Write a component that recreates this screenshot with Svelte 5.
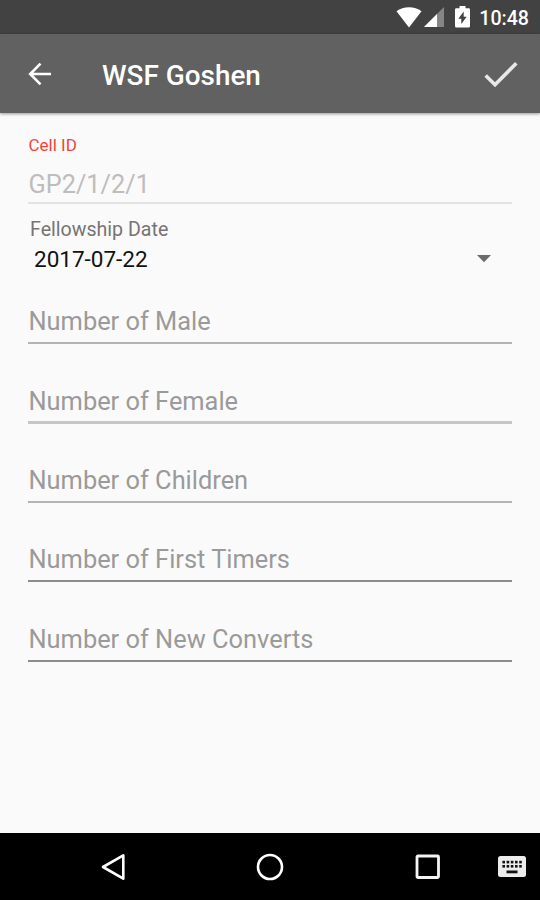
<script>
    let cellId = $state('GP2/1/2/1');
    let date = $state('2017-07-22');

    const fields = [
        { name: 'male', label: 'Number of Male' },
        { name: 'female', label: 'Number of Female' },
        { name: 'children', label: 'Number of Children' },
        { name: 'timers', label: 'Number of First Timers' },
        { name: 'converts', label: 'Number of New Converts' }
    ];
</script>

<div class="screen">
    <div class="status">
        <svg class="wifi" width="26" height="21" viewBox="0 0 26 21">
            <path d="M13 20.5 0.5 4.3C4 1.6 8.300 0.300 13 0.300s9 1.300 12.500 4z" fill="#fff" />
        </svg>
        <svg class="signal" width="20" height="20" viewBox="0 0 20 20">
            <path d="M0 20 20 0v20z" fill="#858585" />
            <path d="M0 20 13 7v13z" fill="#fff" />
        </svg>
        <svg class="battery" width="15" height="22" viewBox="0 0 15 22">
            <path d="M4.500 0h6v2.300h3.200q1.300 0 1.300 1.300v16.600q0 1.300-1.300 1.300H1.300Q0 21.500 0 20.200V3.600q0-1.300 1.300-1.300h3.200z" fill="#fff" />
            <path d="M8.700 5.500v5.200h3L6.300 18v-5.200h-3z" fill="#424242" />
        </svg>
        <span class="clock">10:48</span>
    </div>

    <header>
        <button class="back" aria-label="Back">
            <svg width="24" height="24" viewBox="0 0 24 24">
                <path d="M23 12H2.500M12.500 1.600 2.200 12l10.300 10.400" fill="none" stroke="#fff" stroke-width="2.600" />
            </svg>
        </button>
        <h1>WSF Goshen</h1>
        <button class="done" aria-label="Done">
            <svg width="34" height="27" viewBox="0 0 34 27">
                <path d="M1.700 14.500 11 23.800 32.300 2.200" fill="none" stroke="#e8e8e8" stroke-width="3.600" />
            </svg>
        </button>
    </header>

    <main>
        <div class="cell">
            <span class="caption">Cell ID</span>
            <span class="value">{cellId}</span>
        </div>

        <div class="date">
            <span class="date-label">Fellowship Date</span>
            <div class="spinner">
                <span>{date}</span>
                <svg width="14" height="8" viewBox="0 0 14 8">
                    <path d="M0 0h14L7 7.300z" fill="#6b6b6b" />
                </svg>
            </div>
        </div>

        {#each fields as field (field.name)}
            <div class="field {field.name}">
                <span>{field.label}</span>
            </div>
        {/each}
    </main>

    <nav>
        <svg class="nav-back" width="26" height="28" viewBox="0 0 26 28">
            <path d="M23.300 2.300v23.400L3 14z" fill="none" stroke="#fff" stroke-width="2.600" stroke-linejoin="round" />
        </svg>
        <svg class="nav-home" width="28" height="28" viewBox="0 0 28 28">
            <circle cx="14" cy="14" r="12" fill="none" stroke="#fff" stroke-width="2.600" />
        </svg>
        <svg class="nav-recent" width="26" height="26" viewBox="0 0 26 26">
            <rect x="2" y="2" width="21.500" height="21.500" rx="1" fill="none" stroke="#f4f4f4" stroke-width="2.800" />
        </svg>
        <svg class="nav-keyboard" width="28" height="21" viewBox="0 0 28 21">
            <rect width="28" height="21" rx="2.500" fill="#ececec" />
            {#each [4.4, 8.6, 12.8, 17, 21.2] as x}
                <rect {x} y="4.800" width="2.600" height="2.600" fill="#111" />
                <rect {x} y="9" width="2.600" height="2.600" fill="#111" />
            {/each}
            <rect x="8.500" y="14.500" width="11" height="2.800" fill="#111" />
        </svg>
    </nav>
</div>

<style>
    :global(body) { background: #fafafa; }
    .screen { display: flex; flex-direction: column; height: 900px; background: #fafafa; font-family: Roboto, "Liberation Sans", sans-serif; }
    svg { display: block; flex: none; }
    button { padding: 0; border: none; background: none; }

    .status { display: flex; align-items: center; justify-content: flex-end; height: 34px; padding-right: 11px; background: #424242; box-sizing: border-box; }
    .signal { margin-left: 2px; }
    .battery { margin-left: 11px; }
    .clock { margin-left: 9px; color: #fff; font-size: 19.6px; font-weight: 500; line-height: 24px; padding-top: 3px; }

    header { display: flex; align-items: center; height: 79px; padding: 0 22px 0 28px; background: #616161; box-shadow: 0 1px 3px rgba(0, 0, 0, 0.4); box-sizing: border-box; }
    h1 { margin: 4px 0 0 50px; color: #fff; font-size: 27.9px; font-weight: 500; line-height: 32px; }
    .done { margin-left: auto; padding-top: 1px; }

    main { flex: 1; padding: 0 28px; }
    .cell { display: flex; flex-direction: column; height: 91px; padding: 22px 0 0 0.5px; border-bottom: 2px solid #e2e2e2; box-sizing: border-box; }
    .caption { color: #f44336; font-size: 17px; line-height: 20px; }
    .value { margin-top: 15px; color: #bdbdbd; font-size: 25.3px; line-height: 30px; }

    .date { height: 75px; padding: 14px 21px 0 2px; box-sizing: border-box; }
    .date-label { display: block; color: #757575; font-size: 19.6px; line-height: 24px; }
    .spinner { display: flex; align-items: center; justify-content: space-between; height: 34px; padding-left: 4px; color: #111; font-size: 22.5px; }

    .field { display: flex; align-items: flex-end; height: 79.5px; padding: 0 0 6px 0.5px; border-bottom: 2px solid #b4b4b4; box-sizing: border-box; color: #9a9a9a; font-size: 25.4px; line-height: 30px; }
    .male { height: 64.5px; }
    .female { height: 80.5px; padding-bottom: 5px; border-bottom: 3px solid #c6c6c6; }
    .children { height: 78.5px; }
    .timers, .converts { border-color: #8c8c8c; }

    nav { display: flex; align-items: center; height: 67px; padding: 0 14px 0 100px; background: #000; box-sizing: border-box; }
    .nav-home { margin-left: 130px; }
    .nav-recent { margin-left: 131px; }
    .nav-keyboard { margin-left: auto; }
</style>
